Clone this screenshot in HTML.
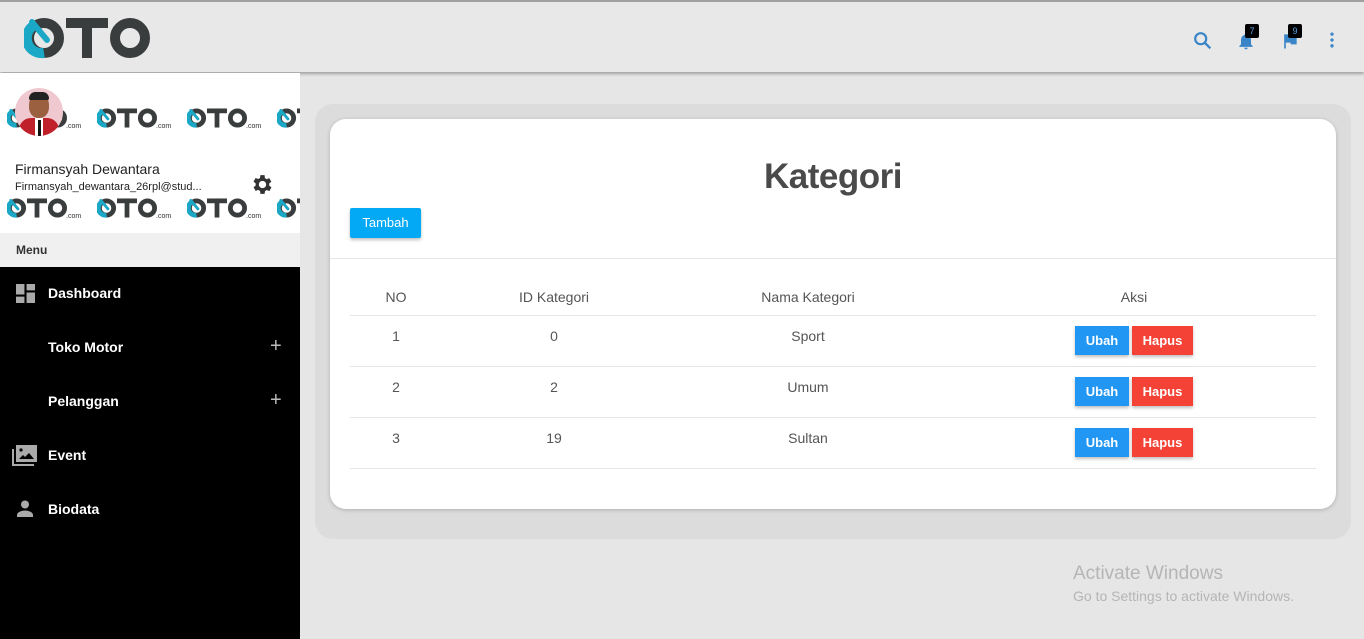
<!DOCTYPE html>
<html><head><meta charset="utf-8"><style>
*{margin:0;padding:0;box-sizing:border-box}
body{width:1364px;height:639px;overflow:hidden;background:#e6e6e6;font-family:"Liberation Sans",sans-serif;position:relative}
.abs{position:absolute}
.hdr{left:0;top:0;width:1364px;height:72px;background:#e8e8e8;border-top:2px solid #a0a0a0;box-shadow:0 2px 3px rgba(0,0,0,.3)}
.side{left:0;top:73px;width:300px;height:566px;background:#000}
.prof{left:0;top:73px;width:300px;height:160px;background:#fff;overflow:hidden}
.menu{left:0;top:233px;width:300px;height:34px;background:#f0f0f0;font-size:12px;font-weight:bold;color:#333;padding:10px 16px}
.item{left:0;width:300px;height:54px;color:#fff;font-size:14px;font-weight:bold}
.item span{position:absolute;left:48px;top:19px}
.plus{position:absolute;left:270px;top:15px;color:#bbb;font-size:20px;font-weight:normal}
.panel{left:315px;top:104px;width:1036px;height:435px;background:#dcdcdc;border-radius:18px}
.card{left:330px;top:119px;width:1006px;height:390px;background:#fff;border-radius:16px;box-shadow:0 1px 4px rgba(0,0,0,.2)}
.t{font-size:14px;color:#555;text-align:center;width:200px}
.line{left:350px;width:966px;height:1px;background:#e6e6e6}
.btn{color:#fff;font-size:13px;font-weight:bold;text-align:center;line-height:29px;height:29px;box-shadow:0 2px 3px rgba(0,0,0,.25)}
.ub{background:#2196f3;width:54px;left:1075px}
.hp{background:#f44336;width:61px;left:1132px}
.badge{background:#000;color:#5aa0e0;font-size:9px;width:14px;height:14px;text-align:center;line-height:14px;border-radius:2px}
.com{font-size:7px;color:#333}
</style></head><body>
<svg width="0" height="0" style="position:absolute">
<defs>
<symbol id="oto" viewBox="0 0 126 48">
<circle cx="20" cy="24" r="15" fill="none" stroke="#3a3d3d" stroke-width="10"/>
<path d="M9 12 A15 15 0 0 0 20 39" fill="none" stroke="#1ba8c6" stroke-width="10"/>
<path d="M8 8 L23 26" stroke="#1ba8c6" stroke-width="6" stroke-linecap="round"/>
<rect x="42" y="4" width="42" height="10" fill="#3a3d3d"/>
<rect x="58" y="4" width="10" height="40" fill="#3a3d3d"/>
<circle cx="106" cy="24" r="15" fill="none" stroke="#3a3d3d" stroke-width="10"/>
</symbol>
</defs></svg>
<div class="abs hdr"></div>
<svg class="abs" style="left:24px;top:14px" width="126" height="48"><use href="#oto"/></svg>
<svg class="abs" style="left:1192px;top:30px" width="22" height="22" viewBox="0 0 24 24"><circle cx="9.5" cy="9.5" r="6" fill="none" stroke="#3a85c8" stroke-width="2.4"/><path d="M14 14l6 6" stroke="#3a85c8" stroke-width="2.6"/></svg>
<svg class="abs" style="left:1236px;top:30px" width="20" height="22" viewBox="0 0 24 24"><path d="M12 22a2 2 0 0 0 2-2h-4a2 2 0 0 0 2 2zm6-6V11c0-3-1.6-5.6-4.5-6.3V4a1.5 1.5 0 0 0-3 0v.7C7.6 5.4 6 8 6 11v5l-2 2v1h16v-1z" fill="#3a85c8"/></svg>
<div class="abs badge" style="left:1245px;top:24px">7</div>
<svg class="abs" style="left:1280px;top:30px" width="20" height="22" viewBox="0 0 24 24"><path d="M14.4 6L14 4H5v17h2v-7h5.6l.4 2h7V6z" fill="#3a85c8"/></svg>
<div class="abs badge" style="left:1288px;top:24px">9</div>
<svg class="abs" style="left:1322px;top:30px" width="20" height="20" viewBox="0 0 24 24"><circle cx="12" cy="5" r="2" fill="#3a85c8"/><circle cx="12" cy="12" r="2" fill="#3a85c8"/><circle cx="12" cy="19" r="2" fill="#3a85c8"/></svg>

<div class="abs side"></div>
<div class="abs prof">
<svg class="abs" style="left:7px;top:33px" width="60" height="24"><use href="#oto"/></svg><span class="abs com" style="left:66px;top:50px">.com</span>
<svg class="abs" style="left:97px;top:33px" width="60" height="24"><use href="#oto"/></svg><span class="abs com" style="left:156px;top:50px">.com</span>
<svg class="abs" style="left:187px;top:33px" width="60" height="24"><use href="#oto"/></svg><span class="abs com" style="left:246px;top:50px">.com</span>
<svg class="abs" style="left:277px;top:33px" width="60" height="24"><use href="#oto"/></svg>
<svg class="abs" style="left:7px;top:123px" width="60" height="24"><use href="#oto"/></svg><span class="abs com" style="left:66px;top:140px">.com</span>
<svg class="abs" style="left:97px;top:123px" width="60" height="24"><use href="#oto"/></svg><span class="abs com" style="left:156px;top:140px">.com</span>
<svg class="abs" style="left:187px;top:123px" width="60" height="24"><use href="#oto"/></svg><span class="abs com" style="left:246px;top:140px">.com</span>
<svg class="abs" style="left:277px;top:123px" width="60" height="24"><use href="#oto"/></svg>
<div class="abs" style="left:15px;top:15px;width:48px;height:48px;border-radius:50%;background:#f0c8d0;overflow:hidden">
<div class="abs" style="left:14px;top:6px;width:20px;height:24px;border-radius:45%;background:#9a6040"></div>
<div class="abs" style="left:14px;top:4px;width:20px;height:8px;border-radius:8px 8px 2px 2px;background:#222"></div>
<div class="abs" style="left:4px;top:30px;width:40px;height:22px;border-radius:12px 12px 0 0;background:#c0202a"></div>
<div class="abs" style="left:20px;top:30px;width:8px;height:18px;background:#fff"></div>
<div class="abs" style="left:23px;top:32px;width:3px;height:16px;background:#111"></div>
</div>
<div class="abs" style="left:15px;top:88px;font-size:14px;color:#222">Firmansyah Dewantara</div>
<div class="abs" style="left:15px;top:108px;font-size:11px;color:#222">Firmansyah_dewantara_26rpl@stud...</div>
<svg class="abs" style="left:250px;top:99px" width="25" height="25" viewBox="0 0 24 24"><path fill="#333" d="M19.4 13a7.5 7.5 0 0 0 0-2l2.1-1.6-2-3.5-2.5 1a7 7 0 0 0-1.7-1L15 3h-4l-.4 2.7a7 7 0 0 0-1.7 1l-2.5-1-2 3.5L6.5 11a7.5 7.5 0 0 0 0 2l-2.1 1.6 2 3.5 2.5-1a7 7 0 0 0 1.7 1L11 21h4l.4-2.7a7 7 0 0 0 1.7-1l2.5 1 2-3.5zM13 15.5a3.5 3.5 0 1 1 0-7 3.5 3.5 0 0 1 0 7z" transform="translate(-1 0)"/></svg>
</div>
<div class="abs menu">Menu</div>
<div class="abs item" style="top:266px"><svg class="abs" style="left:16px;top:18px" width="19" height="19" viewBox="0 0 18 18"><path fill="#aaa" d="M0 0h8v10H0zM0 12h8v6H0zM10 0h8v6h-8zM10 8h8v10h-8z"/></svg><span>Dashboard</span></div>
<div class="abs item" style="top:320px"><span>Toko Motor</span><div class="plus">+</div></div>
<div class="abs item" style="top:374px"><span>Pelanggan</span><div class="plus">+</div></div>
<div class="abs item" style="top:428px"><svg class="abs" style="left:12px;top:17px" width="25" height="21" viewBox="0 0 25 21"><path fill="#aaa" d="M0 4h2v15h20v2H0z"/><path fill="#aaa" d="M4 0h21v17H4zM7 14h15l-5-6-4 4-2-2z"/><circle cx="9" cy="5" r="1.6" fill="#000"/></svg><span>Event</span></div>
<div class="abs item" style="top:482px"><svg class="abs" style="left:17px;top:18px" width="16" height="17" viewBox="0 0 16 17"><circle cx="8" cy="4.5" r="4" fill="#aaa"/><path fill="#aaa" d="M0 17v-2c0-3 5-4.5 8-4.5s8 1.5 8 4.5v2z"/></svg><span>Biodata</span></div>

<div class="abs panel"></div>
<div class="abs card"></div>
<div class="abs" style="left:633px;top:157px;width:400px;text-align:center;font-size:35px;font-weight:bold;color:#4a4a4a;letter-spacing:-0.5px">Kategori</div>
<div class="abs btn" style="left:350px;top:208px;width:71px;height:30px;line-height:30px;background:#03a9f4;font-weight:normal;border-radius:2px">Tambah</div>
<div class="abs line" style="left:330px;width:1006px;top:258px"></div>
<div class="abs t" style="left:296px;top:289px">NO</div>
<div class="abs t" style="left:454px;top:289px">ID Kategori</div>
<div class="abs t" style="left:708px;top:289px">Nama Kategori</div>
<div class="abs t" style="left:1034px;top:289px">Aksi</div>
<div class="abs line" style="top:315px"></div>
<div class="abs t" style="left:296px;top:328px">1</div><div class="abs t" style="left:454px;top:328px">0</div><div class="abs t" style="left:708px;top:328px">Sport</div>
<div class="abs btn ub" style="top:326px">Ubah</div><div class="abs btn hp" style="top:326px">Hapus</div>
<div class="abs line" style="top:366px"></div>
<div class="abs t" style="left:296px;top:379px">2</div><div class="abs t" style="left:454px;top:379px">2</div><div class="abs t" style="left:708px;top:379px">Umum</div>
<div class="abs btn ub" style="top:377px">Ubah</div><div class="abs btn hp" style="top:377px">Hapus</div>
<div class="abs line" style="top:417px"></div>
<div class="abs t" style="left:296px;top:430px">3</div><div class="abs t" style="left:454px;top:430px">19</div><div class="abs t" style="left:708px;top:430px">Sultan</div>
<div class="abs btn ub" style="top:428px">Ubah</div><div class="abs btn hp" style="top:428px">Hapus</div>
<div class="abs line" style="top:468px"></div>
<div class="abs" style="left:1073px;top:563px;font-size:19px;color:#b5b5b5">Activate Windows</div>
<div class="abs" style="left:1073px;top:588px;font-size:14px;color:#b5b5b5">Go to Settings to activate Windows.</div>
</body></html>
